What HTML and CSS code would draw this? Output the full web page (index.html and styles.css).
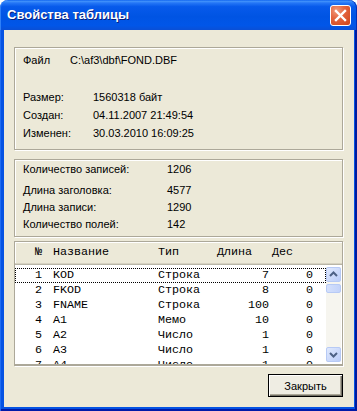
FILE: index.html
```html
<!DOCTYPE html>
<html>

<head>
    <meta charset="utf-8">
    <meta name="viewport" content="width=device-width">
    <title>Свойства таблицы</title>
    <link rel="stylesheet" href="styles.css">
</head>

<body>
    <div class="window">
        <div class="titlebar">
            <span class="title">Свойства таблицы</span>
            <button class="close" aria-label="Закрыть">
                <svg width="19" height="19" viewBox="0 0 19 19">
                    <path d="M5 5L14 14M14 5L5 14" stroke="#fff" stroke-width="2.4" stroke-linecap="square" />
                </svg>
            </button>
        </div>
        <div class="frame">
            <div class="client">
                <div class="group info">
                    <div class="row file"><span class="label">Файл</span><span>C:\af3\dbf\FOND.DBF</span></div>
                    <div class="row"><span class="label">Размер:</span><span>1560318 байт</span></div>
                    <div class="row"><span class="label">Создан:</span><span>04.11.2007 21:49:54</span></div>
                    <div class="row"><span class="label">Изменен:</span><span>30.03.2010 16:09:25</span></div>
                </div>

                <div class="group stats">
                    <div class="row first"><span class="label">Количество записей:</span><span>1206</span></div>
                    <div class="row"><span class="label">Длина заголовка:</span><span>4577</span></div>
                    <div class="row"><span class="label">Длина записи:</span><span>1290</span></div>
                    <div class="row"><span class="label">Количество полей:</span><span>142</span></div>
                </div>

                <div class="list">
                    <div class="list-head cols">
                        <span class="num">№</span>
                        <span class="name">Название</span>
                        <span>Тип</span>
                        <span>Длина</span>
                        <span class="dec-head">Дес</span>
                    </div>
                    <div class="list-body">
                        <div class="rows">
                            <div class="cols item focused"><span class="num">1</span><span class="name">KOD</span><span>Строка</span><span class="right">7</span><span class="right">0</span></div>
                            <div class="cols item"><span class="num">2</span><span class="name">FKOD</span><span>Строка</span><span class="right">8</span><span class="right">0</span></div>
                            <div class="cols item"><span class="num">3</span><span class="name">FNAME</span><span>Строка</span><span class="right">100</span><span class="right">0</span></div>
                            <div class="cols item"><span class="num">4</span><span class="name">A1</span><span>Мемо</span><span class="right">10</span><span class="right">0</span></div>
                            <div class="cols item"><span class="num">5</span><span class="name">A2</span><span>Число</span><span class="right">1</span><span class="right">0</span></div>
                            <div class="cols item"><span class="num">6</span><span class="name">A3</span><span>Число</span><span class="right">1</span><span class="right">0</span></div>
                            <div class="cols item"><span class="num">7</span><span class="name">A4</span><span>Число</span><span class="right">1</span><span class="right">0</span></div>
                        </div>
                        <div class="scrollbar">
                            <div class="sb-btn">
                                <svg width="13" height="13" viewBox="0 0 13 13">
                                    <path d="M3 8L6.5 4.5L10 8" fill="none" stroke="#4D6185" stroke-width="2" />
                                </svg>
                            </div>
                            <div class="sb-thumb"></div>
                            <div class="sb-track"></div>
                            <div class="sb-btn">
                                <svg width="13" height="13" viewBox="0 0 13 13">
                                    <path d="M3 5L6.5 8.5L10 5" fill="none" stroke="#4D6185" stroke-width="2" />
                                </svg>
                            </div>
                        </div>
                    </div>
                </div>

                <div class="actions">
                    <button class="btn">Закрыть</button>
                </div>
            </div>
        </div>
    </div>
</body>

</html>
```

FILE: styles.css
```css
* {
    margin: 0;
    padding: 0;
    box-sizing: border-box;
}

body {
    background: #fff;
    font-family: "Liberation Sans", Arial, sans-serif;
    font-size: 11px;
    color: #000;
}

.window {
    width: 357px;
    height: 411px;
    display: flex;
    flex-direction: column;
}

.titlebar {
    height: 30px;
    flex: none;
    display: flex;
    align-items: flex-start;
    justify-content: space-between;
    padding: 0 6px 0 7px;
    border-radius: 8px 8px 0 0;
    background: linear-gradient(to bottom, #0A5FEE 0%, #4293FB 4%, #2476F6 10%, #075AEB 22%, #0054E3 55%, #0156E8 85%, #0A4FD6 100%);
    box-shadow: inset 1px 0 #2F80F7, inset -1px 0 #0030B8;
}

.title {
    margin-top: 7px;
    color: #fff;
    font-weight: bold;
    font-size: 13px;
    line-height: 16px;
    text-shadow: 1px 1px #0A1E7A;
}

.close {
    margin-top: 5px;
    width: 21px;
    height: 21px;
    border: 1px solid #fff;
    border-radius: 3px;
    background: radial-gradient(circle at 30% 25%, #F19B7C 0%, #E4653F 40%, #CF4418 100%);
    display: flex;
    align-items: center;
    justify-content: center;
}

.frame {
    flex: 1;
    display: flex;
    padding: 0 3px 4px 4px;
    background: #0553E3;
    box-shadow: inset 1px 0 #1E6CF2, inset -2px 0 #001C9E, inset 0 -2px #0019A8;
}

.client {
    flex: 1;
    display: flex;
    flex-direction: column;
    padding: 17px 11px 0 10px;
    background: #ECE9D8;
}

.group {
    border: 1px solid #ACA899;
    box-shadow: inset 1px 1px #fff, 1px 1px #fff;
    padding-left: 8px;
}

.row {
    display: flex;
}

.info {
    height: 103px;
    padding-top: 3px;
}

.info .row {
    line-height: 18px;
}

.info .label {
    width: 70px;
}

.info .file {
    margin-bottom: 19px;
}

.info .file .label {
    width: 47px;
}

.stats {
    margin-top: 9px;
    height: 78px;
    padding-top: 1px;
}

.stats .row {
    line-height: 17px;
}

.stats .first {
    margin-bottom: 4px;
}

.stats .label {
    width: 144px;
}

.list {
    margin-top: 4px;
    height: 125px;
    display: flex;
    flex-direction: column;
    border: 1px solid #ACA899;
    border-bottom-width: 2px;
    box-shadow: 1px 1px #fff;
    background: #fff;
    font-family: "Liberation Mono", "Courier New", monospace;
    font-size: 11.7px;
}

.cols {
    display: grid;
    grid-template-columns: 27px 116px 59px 52px 44px;
    white-space: nowrap;
}

.list-head {
    height: 23px;
    flex: none;
    line-height: 20px;
    background: #ECE9D8;
    border-bottom: 1px solid #B8B5A6;
    box-shadow: inset 0 -1px #D6D2C2, inset 1px 1px #fff;
}

.num,
.right {
    text-align: right;
}

.name {
    padding-left: 11px;
}

.dec-head {
    padding-left: 3px;
}

.list-body {
    flex: 1;
    display: flex;
    overflow: hidden;
}

.rows {
    flex: 1;
    padding-top: 3px;
}

.item {
    height: 15px;
    line-height: 15px;
}

.item.focused {
    outline: 1px dotted #000;
    outline-offset: -1px;
}

.scrollbar {
    width: 15px;
    margin: 2px 1px 2px 0;
    display: flex;
    flex-direction: column;
    background: #F6F5EF;
}

.sb-btn {
    height: 15px;
    flex: none;
    display: flex;
    align-items: center;
    justify-content: center;
    border: 1px solid #B7CAF5;
    border-radius: 2px;
    background: linear-gradient(to bottom right, #E0E9FD, #BBCDF9);
}

.sb-thumb {
    height: 9px;
    margin-top: 2px;
    border: 1px solid #B7CAF5;
    border-radius: 2px;
    background: linear-gradient(to right, #D4E0FC, #C3D3FA);
}

.sb-track {
    flex: 1;
}

.actions {
    margin-top: 8px;
    display: flex;
    justify-content: flex-end;
}

.btn {
    width: 75px;
    height: 23px;
    border: 1px solid #000;
    background: #EFEDE3;
    box-shadow: inset 1px 1px #fff, inset -1px -1px #716F64, inset -2px -2px #ACA899;
    font-family: "Liberation Sans", Arial, sans-serif;
    font-size: 11px;
    color: #000;
}
```
